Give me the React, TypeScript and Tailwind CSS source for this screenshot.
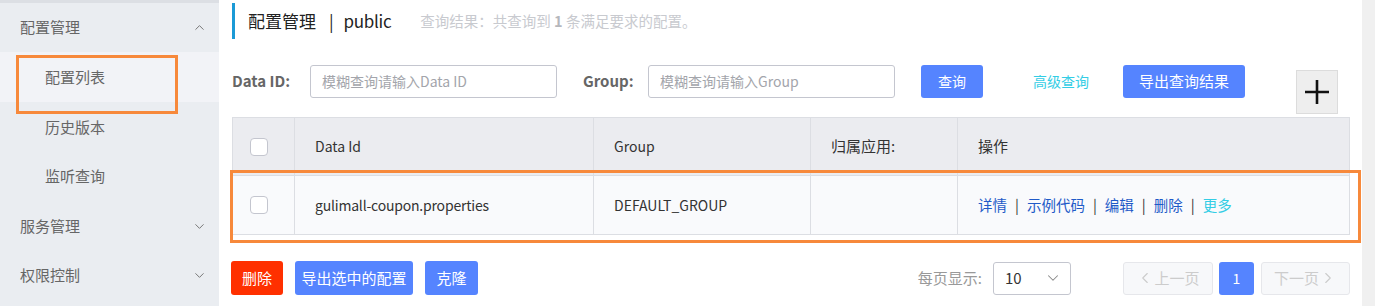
import { ChevronDown, ChevronUp, ChevronLeft, ChevronRight } from "lucide-react";

const cols = "grid grid-cols-[62px_299px_217px_147px_1fr]";

function Checkbox() {
  return <span className="block w-[18px] h-[18px] rounded-[4px] border border-[#c4c6cf] bg-white" />;
}

function Sidebar() {
  return (
    <div className="relative w-[219px] shrink-0 bg-[#eaedf1] border-t-[3px] border-[#dcdfe4] text-[15px] text-[#666]">
      <div className="h-[49px] flex items-center justify-between pl-[20px] pr-[12px]">
        <span>配置管理</span>
        <ChevronUp size={15} strokeWidth={1.6} className="text-[#777]" />
      </div>
      <div className="h-[50px] flex items-center pl-[45px] bg-[#f2f3f7]">配置列表</div>
      <div className="h-[50px] flex items-center pl-[45px]">历史版本</div>
      <div className="h-[49px] flex items-center pl-[45px]">监听查询</div>
      <div className="h-[50px] flex items-center justify-between pl-[20px] pr-[12px]">
        <span>服务管理</span>
        <ChevronDown size={15} strokeWidth={1.6} className="text-[#777]" />
      </div>
      <div className="h-[48px] flex items-center justify-between pl-[20px] pr-[12px]">
        <span>权限控制</span>
        <ChevronDown size={15} strokeWidth={1.6} className="text-[#777]" />
      </div>
      <div className="absolute left-[16px] top-[52px] w-[162px] h-[59px] border-[3px] border-[#f7893b]" />
    </div>
  );
}

function Header() {
  return (
    <div className="mt-[3px] h-[36px] border-l-[3px] border-[#1b9ad6] flex items-center pl-[13px]">
      <span className="text-[17px] text-[#222]">配置管理</span>
      <span className="text-[17px] text-[#222] ml-[13px] mr-[10px]">|</span>
      <span className="text-[17px] text-[#222] tracking-[-0.3px]">public</span>
      <span className="ml-[29px] text-[14.5px] text-[#c8cacf] whitespace-pre">
        查询结果：共查询到 <b className="font-bold text-[#b5b7bc]">1</b> 条满足要求的配置。
      </span>
    </div>
  );
}

function SearchRow() {
  return (
    <div className="mt-[26px] flex items-start">
      <span className="h-[33px] flex items-center text-[15px] font-bold text-[#666] w-[78px]">Data ID:</span>
      <div className="w-[247px] h-[33px] border border-[#c4c6cf] rounded-[3px] flex items-center pl-[11px] text-[14px] text-[#a3a5ab]">
        模糊查询请输入Data ID
      </div>
      <span className="ml-[26px] h-[33px] flex items-center text-[15px] font-bold text-[#666] w-[65px]">Group:</span>
      <div className="w-[247px] h-[33px] border border-[#c4c6cf] rounded-[3px] flex items-center pl-[11px] text-[14px] text-[#a3a5ab]">
        模糊查询请输入Group
      </div>
      <button className="ml-[26px] w-[62px] h-[33px] rounded-[3px] bg-[#5584ff] text-white text-[14px]">查询</button>
      <span className="ml-[50px] h-[33px] flex items-center text-[14px] text-[#33cde5]">高级查询</span>
      <button className="ml-[34px] w-[122px] h-[33px] rounded-[3px] bg-[#5584ff] text-white text-[15px]">导出查询结果</button>
      <div className="ml-auto mr-[12px] mt-[5px] w-[42px] h-[44px] bg-[#eeeeee] border border-[#dcdcdc] flex items-center justify-center">
        <svg width="26" height="26" viewBox="0 0 26 26">
          <path d="M13 1v24M1 13h24" stroke="#111" strokeWidth="2.6" />
        </svg>
      </div>
    </div>
  );
}

function Sep() {
  return <span className="mx-[8px] text-[#333]">|</span>;
}

function Table() {
  const cell = "border-r border-[#dcdee3] flex items-center pl-[20px]";
  return (
    <div className="relative mt-[3px]">
      <div className="border border-[#dcdee3] text-[14px] text-[#333]">
        <div className={`${cols} h-[58px] bg-[#ebecf0] border-b border-[#dcdee3]`}>
          <div className="border-r border-[#dcdee3] flex items-center pl-[17px]"><Checkbox /></div>
          <div className={cell}>Data Id</div>
          <div className={cell}>Group</div>
          <div className={`${cell} text-[15px]`}>归属应用:</div>
          <div className="flex items-center pl-[20px] text-[15px]">操作</div>
        </div>
        <div className={`${cols} h-[58px] bg-[#f9fafc]`}>
          <div className="border-r border-[#dcdee3] flex items-center pl-[17px]"><Checkbox /></div>
          <div className={`${cell} tracking-[-0.2px]`}>gulimall-coupon.properties</div>
          <div className={cell}>DEFAULT_GROUP</div>
          <div className={cell}></div>
          <div className="flex items-center pl-[20px] text-[#1f5ac8] text-[14.5px]">
            <span>详情</span>
            <Sep />
            <span>示例代码</span>
            <Sep />
            <span>编辑</span>
            <Sep />
            <span>删除</span>
            <Sep />
            <span className="text-[#33cde5]">更多</span>
          </div>
        </div>
      </div>
      <div className="absolute left-[-2px] top-[53px] w-[1131px] h-[73px] border-[3px] border-[#f7893b]" />
    </div>
  );
}

function Footer() {
  return (
    <div className="mt-[26px] flex items-center text-[14px]">
      <button className="w-[52px] h-[34px] rounded-[3px] bg-[#ff3000] text-white text-[15px] -ml-[1px]">删除</button>
      <button className="ml-[12px] w-[118px] h-[34px] rounded-[3px] bg-[#5584ff] text-white text-[15px]">导出选中的配置</button>
      <button className="ml-[12px] w-[53px] h-[34px] rounded-[3px] bg-[#5584ff] text-white text-[15px]">克隆</button>
      <span className="ml-auto text-[#999] text-[15px]">每页显示:</span>
      <div className="ml-[11px] w-[78px] h-[33px] border border-[#c4c6cf] rounded-[3px] flex items-center justify-between pl-[11px] pr-[8px] text-[#333] text-[15px]">
        <span>10</span>
        <ChevronDown size={18} strokeWidth={1.4} className="text-[#888]" />
      </div>
      <div className="ml-[52px] w-[90px] h-[33px] border border-[#e6e7eb] bg-[#f7f8fa] rounded-[3px] flex items-center justify-center text-[#ccc] text-[15px]">
        <ChevronLeft size={18} strokeWidth={1.5} />
        <span>上一页</span>
      </div>
      <div className="ml-[6px] w-[35px] h-[33px] rounded-[3px] bg-[#5584ff] text-white flex items-center justify-center">1</div>
      <div className="ml-[7px] w-[89px] h-[33px] border border-[#e6e7eb] bg-[#f7f8fa] rounded-[3px] flex items-center justify-center text-[#ccc] text-[15px]">
        <span>下一页</span>
        <ChevronRight size={18} strokeWidth={1.5} />
      </div>
    </div>
  );
}

export default function App() {
  return (
    <div className="w-[1375px] h-[306px] flex overflow-hidden bg-white font-['Noto_Sans_CJK_SC',sans-serif]">
      <Sidebar />
      <div className="flex-1 pl-[13px] pr-[12px]">
        <Header />
        <SearchRow />
        <Table />
        <Footer />
      </div>
      <div className="w-[13px] shrink-0 bg-[#f0f0f0]" />
    </div>
  );
}
